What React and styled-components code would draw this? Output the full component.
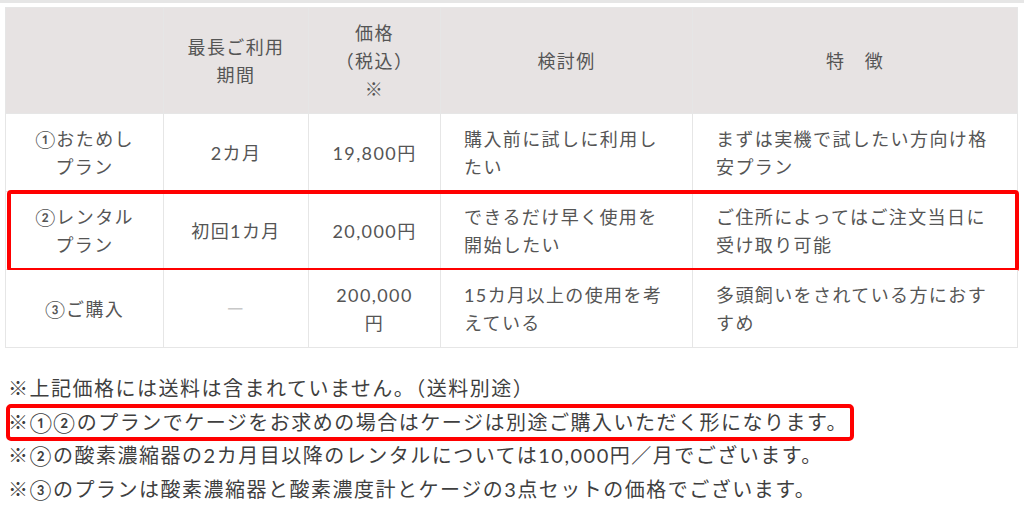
import React from "react";
import styled, { createGlobalStyle, css } from "styled-components";

const Global = createGlobalStyle`
  html, body { margin: 0; padding: 0; background: #fff; }
  body {
    font-family: Lato, "Noto Sans CJK JP", "Noto Sans", sans-serif;
    color: #555;
  }
`;

const Page = styled.div`
  width: 1024px;
  height: 516px;
  overflow: hidden;
  display: flex;
  flex-direction: column;
`;

const TopRule = styled.div`
  height: 3px;
  background: #e6e6e6;
`;

const Table = styled.div`
  margin: 4px 0 0 5px;
  width: 1013px;
  border-top: 1px solid #e6e6e6;
  border-left: 1px solid #e6e6e6;
  box-sizing: border-box;
`;

const COLS = "158px 145px 132px 252px 325px";

const Row = styled.div`
  display: grid;
  grid-template-columns: ${COLS};
  position: relative;
  background: ${(p) => (p.$head ? "#e7e3e3" : "#fff")};
  ${(p) =>
    p.$highlight &&
    css`
      &::after {
        content: "";
        position: absolute;
        top: -2px;
        bottom: -2px;
        left: 1px;
        right: -1px;
        border: 4px solid #ff0000;
        border-radius: 4px;
        pointer-events: none;
      }
    `}
`;

const Cell = styled.div`
  box-sizing: border-box;
  border-right: 1px solid #e6e6e6;
  border-bottom: 1px solid #e6e6e6;
  padding: 11px 6px 10px;
  padding-left: ${(p) => (p.$left ? "23px" : "6px")};
  display: flex;
  align-items: center;
  justify-content: ${(p) => (p.$left ? "flex-start" : "center")};
  text-align: ${(p) => (p.$left ? "left" : "center")};
  font-size: 18px;
  letter-spacing: 1.4px;
  line-height: 28px;
  white-space: nowrap;
  color: ${(p) => (p.$muted ? "#c8c8c8" : "#555")};
`;

const Notes = styled.div`
  margin-top: 24px;
  padding-left: 8px;
  display: flex;
  flex-direction: column;
  align-items: flex-start;
`;

const Note = styled.div`
  font-size: 20px;
  letter-spacing: 1.5px;
  line-height: 33.5px;
  color: #3f3f3f;
  white-space: nowrap;
  border-radius: 3px;
  ${(p) =>
    p.$highlight &&
    css`
      outline: 4px solid #ff0000;
      outline-offset: -2px;
      padding-right: 4px;
    `}
`;

const Lines = ({ text }) => {
  const parts = text.split("\n");
  return (
    <span>
      {parts.map((t, i) => (
        <React.Fragment key={i}>
          {i > 0 && <br />}
          {t}
        </React.Fragment>
      ))}
    </span>
  );
};

const header = ["", "最長ご利用\n期間", "価格\n（税込）\n※", "検討例", "特　徴"];

const rows = [
  {
    cells: [
      "①おためし\nプラン",
      "2カ月",
      "19,800円",
      "購入前に試しに利用し\nたい",
      "まずは実機で試したい方向け格\n安プラン",
    ],
  },
  {
    highlight: true,
    cells: [
      "②レンタル\nプラン",
      "初回1カ月",
      "20,000円",
      "できるだけ早く使用を\n開始したい",
      "ご住所によってはご注文当日に\n受け取り可能",
    ],
  },
  {
    cells: [
      "③ご購入",
      "ー",
      "200,000\n円",
      "15カ月以上の使用を考\nえている",
      "多頭飼いをされている方におす\nすめ",
    ],
    muted: 1,
  },
];

const notes = [
  { text: "※上記価格には送料は含まれていません。（送料別途）" },
  { text: "※①②のプランでケージをお求めの場合はケージは別途ご購入いただく形になります。", highlight: true },
  { text: "※②の酸素濃縮器の2カ月目以降のレンタルについては10,000円／月でございます。" },
  { text: "※③のプランは酸素濃縮器と酸素濃度計とケージの3点セットの価格でございます。" },
];

export default function App() {
  return (
    <Page>
      <Global />
      <TopRule />
      <Table>
        <Row $head>
          {header.map((h, i) => (
            <Cell key={i}>
              <Lines text={h} />
            </Cell>
          ))}
        </Row>
        {rows.map((r, ri) => (
          <Row key={ri} $highlight={r.highlight}>
            {r.cells.map((c, ci) => (
              <Cell key={ci} $left={ci >= 3} $muted={r.muted === ci}>
                <Lines text={c} />
              </Cell>
            ))}
          </Row>
        ))}
      </Table>
      <Notes>
        {notes.map((n, i) => (
          <Note key={i} $highlight={n.highlight}>
            {n.text}
          </Note>
        ))}
      </Notes>
    </Page>
  );
}
